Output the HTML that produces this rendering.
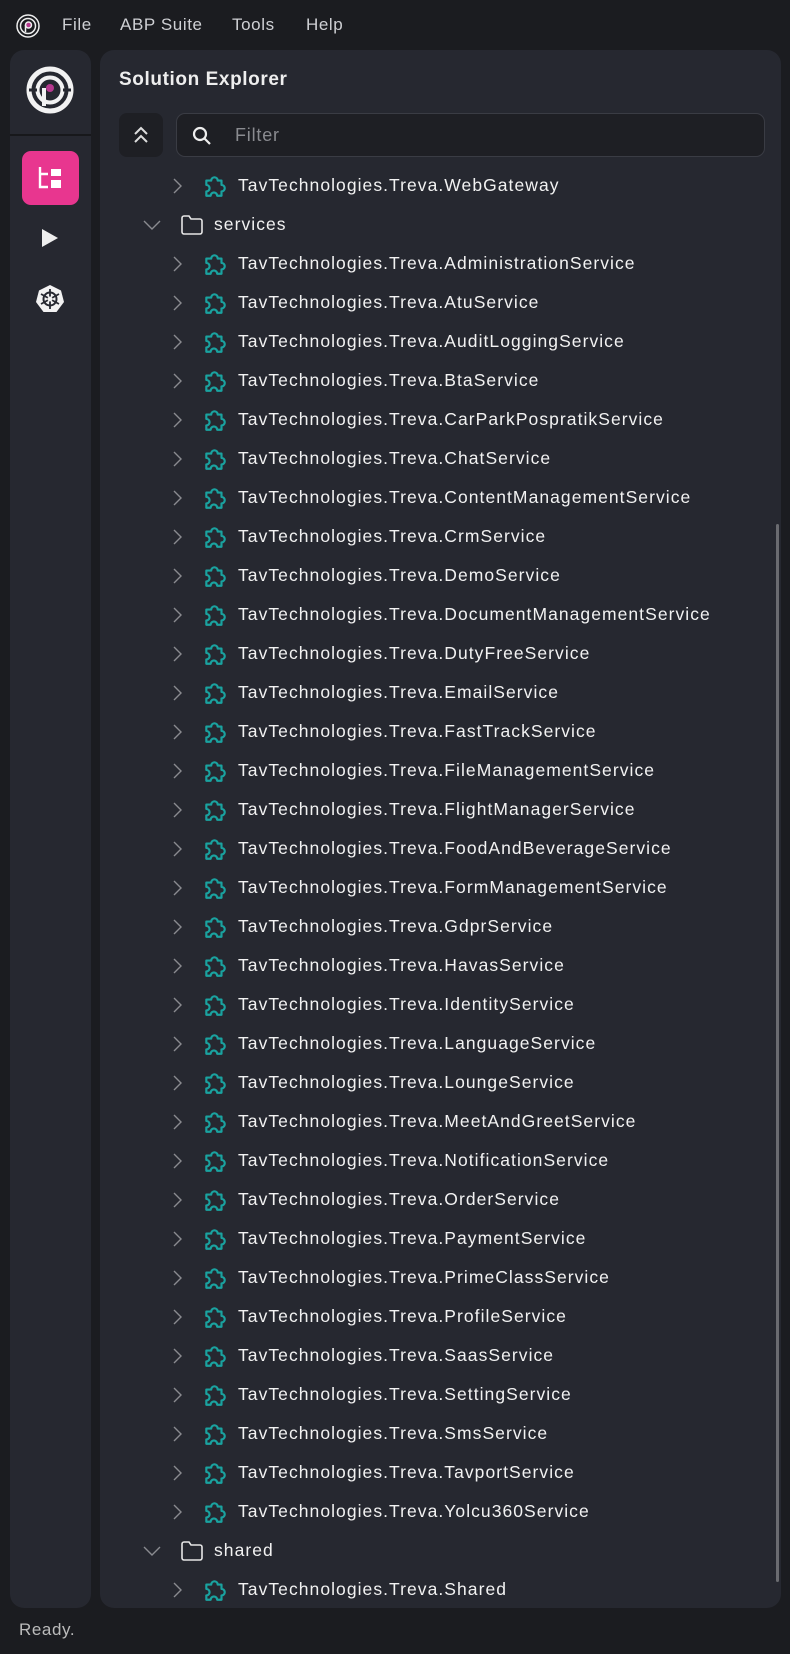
<!DOCTYPE html>
<html><head><meta charset="utf-8"><style>
*{margin:0;padding:0;box-sizing:border-box}
body{width:790px;height:1654px;background:#1b1c20;font-family:"Liberation Sans",sans-serif;position:relative;overflow:hidden;color:#fff}
.menu{position:absolute;top:15px;font-size:17px;color:#cfd0d4;letter-spacing:0.6px}
.side{position:absolute;left:10px;top:50px;width:81px;height:1558px;background:#262830;border-radius:14px}
.main{position:absolute;left:100px;top:50px;width:681px;height:1558px;background:#262830;border-radius:14px;overflow:hidden}
.title{position:absolute;left:19px;top:19px;font-size:19px;font-weight:bold;color:#eee;letter-spacing:0.6px}
.cbtn{position:absolute;left:19px;top:63px;width:44px;height:44px;background:#1e1f24;border-radius:8px}
.filter{position:absolute;left:76px;top:63px;width:589px;height:44px;background:#1e1f24;border:1.5px solid #3a3c44;border-radius:9px}
.filter span{position:absolute;left:58px;top:11px;font-size:18px;color:#8a8b90;letter-spacing:0.8px}
.row{position:absolute;height:39px;display:flex;align-items:center;font-size:17.5px;letter-spacing:1.05px;color:#f2f2f2;white-space:nowrap}
.row svg{flex:none}
.scroll{position:absolute;left:676px;top:474px;width:3px;height:1058px;background:#6a6b70;border-radius:2px}
.status{position:absolute;left:19px;top:1620px;font-size:17px;color:#bbb;letter-spacing:0.6px}
</style></head><body>
<svg style="position:absolute;left:16px;top:14px" width="24" height="24" viewBox="0 0 48 48"><circle cx="24" cy="24" r="22" fill="none" stroke="#eee" stroke-width="3"/><circle cx="24" cy="24" r="15" fill="none" stroke="#eee" stroke-width="3"/><circle cx="25" cy="22" r="6" fill="#b6398f" stroke="#eee" stroke-width="3"/><path d="M19 22v14" stroke="#eee" stroke-width="3"/></svg>
<div class="menu" style="left:62px">File</div>
<div class="menu" style="left:120px">ABP Suite</div>
<div class="menu" style="left:232px">Tools</div>
<div class="menu" style="left:306px">Help</div>

<div class="side">
<svg style="position:absolute;left:16px;top:16px" width="48" height="48" viewBox="0 0 48 48"><circle cx="24" cy="24" r="21" fill="none" stroke="#f2f2f2" stroke-width="5"/><circle cx="24" cy="24" r="12.5" fill="none" stroke="#f2f2f2" stroke-width="4"/><path d="M3 24h8M37 24h8" stroke="#262830" stroke-width="3"/><path d="M18 22v18" stroke="#f2f2f2" stroke-width="4"/><circle cx="24" cy="22" r="4" fill="#b6398f"/></svg>
<div style="position:absolute;left:0;top:84px;width:81px;height:2px;background:#17181b"></div>
<div style="position:absolute;left:12px;top:101px;width:57px;height:54px;background:#e8368f;border-radius:9px">
<svg style="position:absolute;left:16px;top:15px" width="25" height="24" viewBox="0 0 25 24" fill="none" stroke="#fff" stroke-width="2.4"><path d="M2 1v20h8M2 8h8"/><rect x="13" y="3" width="10" height="7" fill="#fff" stroke="none"/><rect x="13" y="14" width="10" height="8" fill="#fff" stroke="none"/></svg></div>
<svg style="position:absolute;left:31px;top:178px" width="18" height="20" viewBox="0 0 18 20"><path d="M1 1L17 10 1 19Z" fill="#eee"/></svg>
<svg style="position:absolute;left:25px;top:234px" width="30" height="30" viewBox="0 0 30 30"><path d="M15 1L26 6.5 29 18 21.5 28H8.5L1 18 4 6.5Z" fill="#f2f2f2"/><circle cx="15" cy="15" r="6.5" fill="none" stroke="#262830" stroke-width="2"/><path d="M15 5v20M6 10l18 10M6 20l18-10" stroke="#262830" stroke-width="1.8"/><circle cx="15" cy="15" r="2.5" fill="#f2f2f2"/></svg>
</div>

<div class="main">
<div class="title">Solution Explorer</div>
<div class="cbtn"><svg style="position:absolute;left:14px;top:13px" width="16" height="18" viewBox="0 0 16 18" fill="none" stroke="#ddd" stroke-width="2"><path d="M2 8l6-6 6 6M2 16l6-6 6 6"/></svg></div>
<div class="filter"><svg style="position:absolute;left:15px;top:12px" width="20" height="20" viewBox="0 0 20 20" fill="none" stroke="#eee" stroke-width="2.2"><circle cx="8" cy="8" r="6"/><path d="M12.5 12.5L18 18"/></svg><span>Filter</span></div>
<div id="list"></div>
<div class="scroll"></div>
</div>
<div class="status">Ready.</div>
<script>
const chev='<svg width="12" height="18" viewBox="0 0 12 18" fill="none" stroke="#8a8b90" stroke-width="1.4"><path d="M2 2l7 7-7 7"/></svg>';
const down='<svg width="20" height="12" viewBox="0 0 20 12" fill="none" stroke="#8a8b90" stroke-width="1.4"><path d="M2 2l8 8 8-8"/></svg>';
const puz='<svg width="26" height="26" viewBox="0 0 24 24" fill="none" stroke="#1aa3a0" stroke-width="2" stroke-linejoin="round"><path d="M4 7h4.5a3 3 0 1 1 6 0H18v4a3 3 0 1 1 0 6v4h-4a3 3 0 1 0-6 0H4v-4a3 3 0 1 0 0-6Z"/></svg>';
const fold='<svg width="24" height="22" viewBox="0 0 24 22" fill="none" stroke="#e6e6e6" stroke-width="1.6"><path d="M2 4a2 2 0 0 1 2-2h5l2 3h9a2 2 0 0 1 2 2v11a2 2 0 0 1-2 2H4a2 2 0 0 1-2-2Z"/></svg>';
const svc="Administration Atu AuditLogging Bta CarParkPospratik Chat ContentManagement Crm Demo DocumentManagement DutyFree Email FastTrack FileManagement FlightManager FoodAndBeverage FormManagement Gdpr Havas Identity Language Lounge MeetAndGreet Notification Order Payment PrimeClass Profile Saas Setting Sms Tavport Yolcu360".split(" ");
let rows=[['p','TavTechnologies.Treva.WebGateway'],['f','services']];
svc.forEach(s=>rows.push(['p','TavTechnologies.Treva.'+s+'Service']));
rows.push(['f','shared'],['p','TavTechnologies.Treva.Shared']);
let h='';
rows.forEach((r,i)=>{const top=116+39*i;
if(r[0]=='p')h+=`<div class="row" style="left:72px;top:${top}px">${chev}<span style="width:18px"></span>${puz}<span style="margin-left:10px">${r[1]}</span></div>`;
else h+=`<div class="row" style="left:42px;top:${top}px">${down}<span style="width:18px"></span>${fold}<span style="margin-left:10px">${r[1]}</span></div>`;});
document.getElementById('list').innerHTML=h;
</script>
</body></html>
